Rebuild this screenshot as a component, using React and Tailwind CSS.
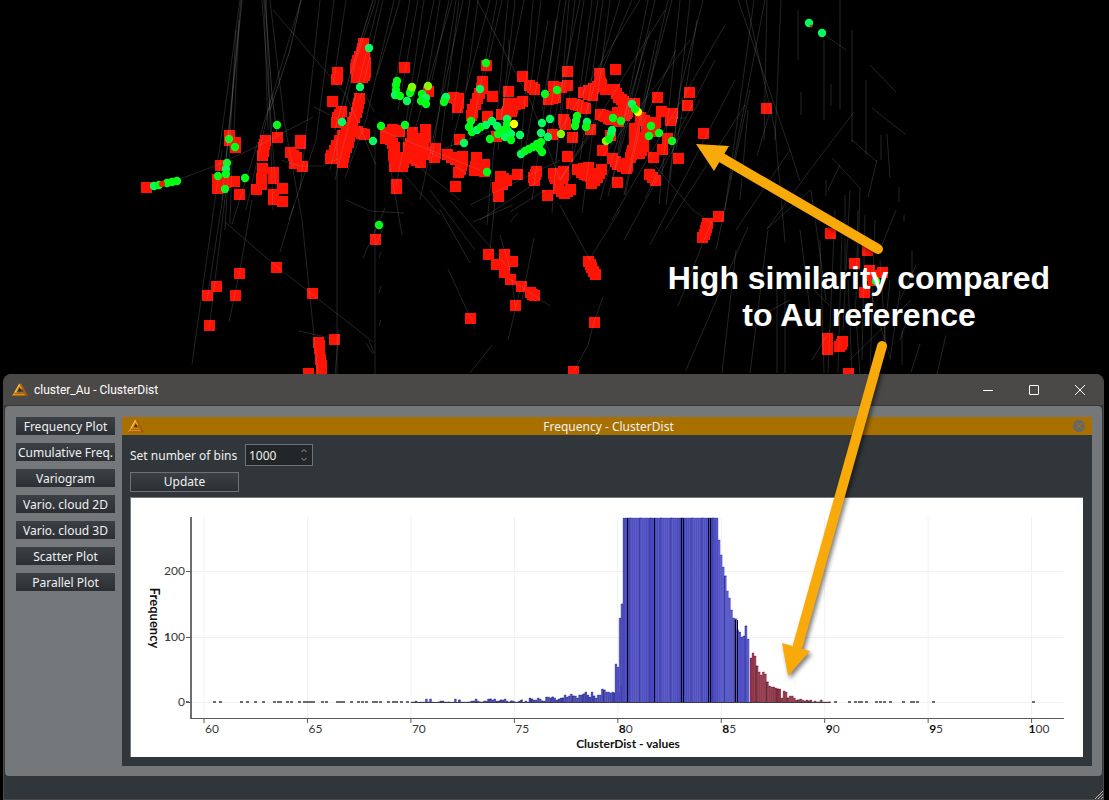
import React, { useState } from 'react';

// Drill hole traces: x1, y1, x2, y2
const traces = [
  [241, 0, 222, 200], [240, 0, 218, 160], [239, 20, 234, 130], [222, 150, 192, 364], [226, 190, 209, 330],
  [224, 190, 207, 300], [232, 160, 230, 224], [236, 30, 225, 230], [262, 0, 276, 190], [266, 0, 273, 210],
  [270, 0, 284, 120], [264, 0, 268, 130], [301, 0, 268, 110], [268, 110, 232, 224], [272, 95, 246, 210],
  [320, 0, 300, 190], [334, 0, 316, 140], [316, 140, 289, 220], [346, 0, 334, 80], [273, 10, 346, 95],
  [346, 95, 376, 165], [376, 0, 356, 60], [356, 60, 330, 170], [383, 0, 360, 100], [379, 0, 335, 180],
  [394, 0, 366, 120], [366, 120, 345, 178], [400, 0, 377, 75], [337, 140, 337, 374], [375, 130, 375, 374],
  [284, 120, 302, 220], [302, 220, 318, 374], [252, 200, 240, 270], [240, 270, 229, 322], [225, 222, 277, 267],
  [277, 267, 312, 294], [312, 294, 373, 342], [366, 343, 373, 354], [369, 340, 374, 353], [299, 331, 330, 338],
  [339, 330, 335, 374], [294, 205, 280, 252], [385, 208, 363, 258], [346, 200, 370, 211], [370, 211, 404, 213],
  [384, 225, 376, 245], [381, 252, 379, 258], [381, 286, 379, 293], [381, 320, 379, 326],
  [177, 180, 215, 166], [215, 166, 262, 144], [262, 144, 313, 117], [281, 160, 300, 166], [300, 166, 322, 166],
  [322, 166, 340, 158], [314, 107, 342, 121], [362, 88, 374, 112], [390, 165, 402, 235],
  [410, 0, 392, 100], [418, 0, 398, 110], [424, 0, 402, 150], [434, 0, 396, 185], [440, 0, 424, 100],
  [452, 0, 415, 130], [449, 0, 432, 80], [456, 0, 430, 170], [463, 0, 420, 200], [470, 0, 452, 120],
  [459, 0, 440, 150], [478, 0, 466, 90], [490, 0, 450, 150], [497, 0, 470, 140], [502, 0, 484, 80],
  [508, 0, 490, 190], [477, 0, 530, 100], [530, 100, 560, 180], [515, 0, 498, 150], [509, 40, 509, 66],
  [524, 0, 500, 120], [533, 0, 520, 160], [541, 0, 530, 90], [548, 20, 520, 180], [556, 20, 532, 200],
  [560, 0, 542, 110], [566, 0, 545, 150], [575, 0, 556, 160], [569, 0, 552, 213], [584, 0, 563, 140],
  [580, 0, 550, 140], [592, 0, 572, 150], [598, 0, 570, 180], [603, 0, 580, 160], [610, 0, 582, 213],
  [620, 0, 584, 120], [640, 0, 560, 130], [632, 0, 598, 80], [655, 0, 612, 180], [648, 0, 618, 150],
  [665, 10, 560, 180], [650, 30, 600, 200], [645, 60, 608, 196], [656, 40, 624, 195], [668, 0, 625, 195],
  [676, 50, 640, 130], [672, 0, 640, 120], [690, 40, 600, 160], [680, 0, 659, 204], [690, 0, 670, 180],
  [703, 0, 680, 90], [680, 90, 666, 205], [697, 20, 676, 150], [725, 25, 612, 220], [715, 60, 645, 198],
  [700, 100, 624, 240], [735, 80, 650, 245], [745, 105, 665, 230], [650, 160, 693, 210], [693, 210, 716, 226],
  [765, 0, 730, 180], [754, 0, 725, 210], [750, 90, 716, 250], [748, 110, 740, 200], [767, 0, 764, 140],
  [738, 0, 790, 150], [746, 0, 775, 130], [775, 130, 785, 242], [781, 0, 775, 140], [790, 150, 800, 181],
  [790, 150, 736, 230], [771, 108, 757, 156], [748, 227, 686, 370], [736, 250, 722, 373], [712, 220, 678, 306],
  [768, 230, 750, 373], [777, 270, 777, 373], [785, 280, 785, 373], [800, 230, 810, 310], [840, 0, 840, 110],
  [854, 112, 810, 170], [810, 170, 767, 229], [872, 108, 905, 134], [870, 65, 896, 92], [822, 33, 846, 50],
  [824, 40, 824, 120], [798, 10, 798, 60], [801, 92, 801, 115], [831, 84, 831, 106], [852, 30, 852, 142],
  [866, 80, 866, 155], [881, 135, 881, 160], [887, 134, 890, 178], [877, 160, 868, 197], [852, 140, 877, 162],
  [832, 158, 860, 188], [860, 188, 858, 260], [840, 165, 828, 190], [826, 180, 826, 196], [899, 187, 899, 202],
  [904, 215, 904, 222], [896, 210, 882, 245], [810, 190, 767, 229], [811, 190, 818, 240], [818, 240, 826, 300],
  [845, 195, 845, 270], [850, 190, 843, 330], [858, 210, 856, 300], [835, 210, 828, 373], [842, 230, 838, 373],
  [875, 220, 870, 373], [865, 215, 862, 360], [880, 260, 886, 350], [890, 280, 884, 340], [900, 290, 890, 360],
  [912, 250, 912, 280], [916, 265, 900, 300], [922, 275, 905, 275], [902, 330, 902, 365], [907, 320, 900, 340],
  [920, 344, 911, 372], [946, 335, 937, 374], [911, 300, 850, 360], [790, 300, 762, 315], [814, 290, 830, 306],
  [830, 330, 812, 360], [855, 300, 860, 374], [848, 280, 852, 374], [870, 290, 890, 358], [820, 240, 824, 373],
  [450, 200, 510, 270], [430, 190, 475, 250], [440, 210, 470, 263], [448, 269, 471, 319], [471, 319, 475, 329],
  [495, 200, 490, 250], [500, 235, 512, 275], [534, 238, 522, 300], [520, 290, 508, 340], [492, 345, 470, 373],
  [510, 279, 550, 306], [512, 280, 515, 306], [560, 205, 590, 260], [620, 210, 589, 260], [603, 297, 594, 322],
  [594, 322, 588, 345], [588, 345, 574, 371], [513, 205, 473, 222], [490, 190, 487, 225], [518, 213, 510, 222],
  [470, 175, 430, 152], [470, 205, 560, 160], [480, 220, 540, 180], [510, 212, 545, 190], [560, 180, 600, 120],
  [380, 130, 480, 170], [400, 170, 440, 215], [410, 160, 460, 200], [440, 150, 520, 120], [672, 118, 686, 118],
];

// Each entry is a chain of x, y points drawn as square markers
const squares = [
  [146, 187], [229, 135, 229, 140], [235, 142, 235, 147], [220, 165], [217, 179, 217, 188, 225, 182], [234, 181],
  [239, 194], [265, 140, 263, 147, 262, 155], [262, 168], [261, 178, 261, 184], [256, 189], [277, 137],
  [273, 172, 273, 178], [282, 188], [273, 194, 273, 199], [282, 201], [300, 140, 300, 143], [290, 152, 296, 157, 294, 163],
  [302, 166], [337, 72, 336, 79], [332, 101], [341, 111, 337, 117, 336, 122], [363, 43, 361, 52, 357, 60, 355, 68, 356, 76],
  [362, 50, 365, 62, 365, 72, 362, 77, 356, 77, 360, 66], [359, 98, 357, 107, 354, 117, 350, 127, 342, 135, 336, 145, 331, 155, 330, 158],
  [350, 130, 348, 142, 344, 152, 342, 162, 340, 150, 336, 158], [357, 131, 364, 134],
  [404, 67], [428, 91], [453, 97, 458, 98, 457, 107], [486, 65], [482, 81, 481, 88, 477, 98, 472, 109, 471, 115], [487, 116],
  [492, 96], [508, 91], [522, 101, 515, 104, 508, 103, 511, 111, 501, 114, 512, 108], [522, 76], [529, 85, 534, 89],
  [553, 86], [548, 99, 555, 97], [561, 87], [567, 71], [567, 85], [459, 139], [496, 136], [552, 134],
  [385, 132, 385, 138, 392, 129, 399, 131], [390, 139, 394, 147, 393, 155, 394, 166, 402, 166, 403, 157], [412, 132, 412, 139, 408, 147, 413, 155],
  [425, 129, 425, 137, 421, 147, 420, 155, 420, 162, 412, 158], [416, 138, 422, 140], [435, 148, 434, 157, 426, 151],
  [396, 184, 396, 188], [447, 154, 455, 159, 462, 156, 461, 165, 458, 172], [455, 186], [476, 157, 476, 162, 474, 170, 484, 164, 484, 171],
  [500, 176, 506, 180, 497, 187, 498, 196], [517, 174], [536, 171, 533, 177, 534, 180], [553, 173, 555, 178, 563, 171, 562, 178],
  [558, 188, 564, 193, 570, 189], [547, 195], [599, 73, 599, 79, 601, 84, 593, 88, 583, 92, 592, 95], [615, 69],
  [605, 89, 614, 89, 618, 97, 623, 101], [571, 103, 578, 105, 585, 108], [563, 119, 565, 124], [572, 137], [567, 156],
  [590, 129], [600, 114, 605, 116, 610, 119, 617, 112], [618, 121], [627, 111, 624, 115], [634, 103], [640, 117, 647, 122, 655, 122, 653, 131, 646, 130],
  [657, 97], [689, 92], [687, 105], [661, 111], [672, 113, 670, 120], [667, 138], [662, 149], [653, 157], [678, 158], [703, 133],
  [649, 174, 655, 180], [634, 128, 634, 137, 643, 137, 643, 146, 639, 153, 632, 150, 630, 157], [634, 142], [610, 135], [602, 150],
  [612, 158, 617, 164, 626, 168, 627, 163], [617, 182], [601, 169, 597, 177, 591, 183], [588, 167, 577, 169, 584, 174, 590, 176],
  [766, 108], [718, 216], [707, 223, 705, 230, 702, 237], [830, 233], [867, 250], [854, 263], [869, 270, 873, 280], [882, 272],
  [864, 292], [827, 338], [827, 349], [842, 341, 839, 346], [848, 373], [375, 239], [276, 267], [239, 273], [216, 286],
  [207, 295], [235, 295], [209, 325], [312, 293], [334, 339], [318, 342, 319, 348], [320, 359, 321, 371], [308, 373],
  [488, 254], [504, 254, 504, 272], [512, 261], [496, 264], [510, 279], [521, 286], [530, 292, 534, 295], [515, 305], [470, 318],
  [588, 261, 591, 267, 595, 274], [594, 322], [573, 371],
];

const dotColors = {
  g: '#00ff14',
  t: '#00ff5c',
  l: '#84ff00',
  y: '#ffff00',
};

const dots = [
  [369, 48, 't'], [360, 87, 't'], [342, 122, 't'], [277, 125, 'g'], [381, 126, 'g'], [373, 141, 't'], [229, 139, 'g'],
  [235, 147, 'g'], [227, 163, 'g'], [226, 169, 't'], [218, 176, 'g'], [226, 174, 'g'], [225, 189, 'g'], [245, 178, 'g'],
  [154, 186, 't'], [159, 185, 'g'], [167, 183, 'g'], [172, 182, 'g'], [177, 181, 'g'], [397, 81, 'g'], [396, 85, 'g'],
  [396, 90, 'g'], [395, 95, 't'], [400, 96, 'g'], [410, 93, 'g'], [411, 90, 'g'], [412, 87, 'l'], [407, 101, 't'], [428, 86, 'l'],
  [422, 94, 'g'], [426, 98, 't'], [421, 101, 'g'], [426, 104, 'g'], [446, 97, 't'], [445, 99, 't'], [444, 102, 'g'], [486, 63, 'g'],
  [480, 89, 't'], [405, 125, 'g'], [471, 121, 'g'], [469, 127, 'g'], [472, 132, 'g'], [477, 130, 't'], [481, 127, 'g'],
  [486, 125, 't'], [492, 121, 't'], [497, 126, 't'], [507, 119, 't'], [507, 124, 'g'], [502, 130, 'g'], [508, 131, 'g'],
  [498, 134, 'g'], [490, 139, 'g'], [464, 143, 't'], [505, 137, 't'], [511, 134, 't'], [511, 140, 'g'], [520, 135, 't'],
  [514, 124, 'y'], [542, 123, 't'], [550, 119, 't'], [545, 94, 'g'], [557, 90, 'g'], [541, 133, 't'], [548, 137, 't'],
  [561, 134, 'l'], [521, 154, 't'], [525, 151, 'g'], [529, 149, 'g'], [533, 147, 'g'], [537, 144, 'g'], [541, 142, 'g'],
  [539, 148, 'g'], [542, 152, 'g'], [487, 172, 'g'], [577, 116, 'g'], [576, 121, 'g'], [575, 126, 'g'], [587, 122, 't'],
  [586, 127, 'g'], [638, 112, 'y'], [632, 104, 't'], [635, 109, 'g'], [606, 141, 'l'], [612, 130, 't'], [611, 134, 't'],
  [609, 139, 'g'], [651, 126, 'g'], [649, 136, 'g'], [659, 133, 'g'], [672, 141, 'g'], [379, 225, 'g'], [809, 23, 't'],
  [822, 33, 't'], [876, 281, 'g'], [613, 118, 'g'], [621, 121, 'g'],
];

const chainMarkers = (points) => {
  const out = [];
  for (let i = 0; i < points.length; i += 2) {
    const [x, y, nx, ny] = points.slice(i, i + 4);
    out.push([x, y]);
    if (nx !== undefined) {
      out.push([Math.round((x + nx) / 2), Math.round((y + ny) / 2)]);
    }
  }
  return out;
};

const DrillScene = () => (
  <svg
    viewBox="0 0 1109 374"
    preserveAspectRatio="xMidYMax slice"
    className="block w-full h-full"
    role="img"
    aria-label="Drill holes"
  >
    <g fill="#ff1405">
      {squares.flatMap(chainMarkers).map(([x, y], i) => (
        <rect key={i} x={x - 5} y={y - 5} width="11" height="11" />
      ))}
    </g>
    {dots.map(([x, y, c], i) => (
      <circle key={i} cx={x} cy={y} r="4.2" fill={dotColors[c]} />
    ))}
    <circle cx="162" cy="184" r="3" fill="#ff1405" />
    <circle cx="811" cy="26" r="1.5" fill="#b04a10" />
    <g stroke="#a0a5aa" strokeOpacity="0.22">
      {traces.map(([x1, y1, x2, y2], i) => (
        <line key={i} x1={x1} y1={y1} x2={x2} y2={y2} />
      ))}
    </g>
    <g stroke="#a0a5aa" strokeOpacity="0.3" fill="none">
      <path d="M242 0L234 80L225 170" />
      <path d="M301 0L290 50L270 110" />
      <path d="M265 0L272 95L277 135" />
      <path d="M373 0L350 75L335 130" />
    </g>
  </svg>
);

// Histogram geometry
const BASE = 205;
const STEP = 2.07;
const xOf = (value) => 73 + (value - 60) * 20.69;

const xTicks = [
  { value: 60, strong: '', light: '60' },
  { value: 65, strong: '', light: '65' },
  { value: 70, strong: '', light: '70' },
  { value: 75, strong: '', light: '75' },
  { value: 80, strong: '8', light: '0' },
  { value: 85, strong: '8', light: '5' },
  { value: 90, strong: '9', light: '0' },
  { value: 95, strong: '9', light: '5' },
  { value: 100, strong: '1', light: '00' },
];

const lowTail = [
  1, 1, 2, 0, 1, 1, 1, 4, 1, 4, 1, 0, 0, 1, 2, 2, 1, 1, 1, 0, 1, 4, 0, 3, 1, 1, 1, 1, 1, 2, 2, 4, 2, 1, 1, 2, 2, 4,
  4, 3, 4, 2, 2, 3, 3, 4, 2, 1, 2, 2, 1, 1, 2, 3, 0, 2, 1, 5, 4, 3, 3, 5, 4, 2, 2, 6, 6, 5, 6, 5, 3, 4, 5, 5, 8, 6,
  7, 9, 7, 7, 5, 8, 8, 9, 11, 8, 6, 11, 7, 5, 8, 8, 14, 13, 11, 11, 10, 11, 10, 11, 10, 17,
];
const rise = [39, 36, 85, 99];
const fall = [163, 148, 136, 127, 112, 105, 93, 85, 84, 73, 71, 66, 67, 77, 64];
const highTail = [
  45, 50, 47, 37, 31, 28, 31, 29, 21, 17, 16, 16, 15, 14, 14, 5, 12, 11, 5, 7, 7, 5, 3, 3, 4, 3, 2, 3, 2, 3, 1, 2, 1,
  1, 3, 1, 1, 1, 1,
];
const strays = [
  55, 82, 88, 109, 115, 123, 131, 142, 146, 148, 155, 159, 167, 172, 175, 178, 181, 190, 194,
  205, 208, 211, 219, 226, 230, 234, 241, 244, 248, 256, 261, 264, 269, 275, 703, 717, 723, 727, 729,
  734, 744, 748, 752, 758, 771, 779, 781, 785, 801, 901,
];

const Bars = ({ start, heights, fill, dark }) =>
  heights.map((h, i) =>
    h > 0 ? (
      <g key={i}>
        <rect x={start + i * STEP} y={BASE - h} width={STEP} height={h} fill={fill} />
        <path
          d={`M${start + i * STEP} ${BASE}V${BASE - h}h${STEP}`}
          fill="none"
          stroke={dark}
          strokeWidth="0.8"
          strokeOpacity={i % 5 === 3 ? 0.8 : 0.4}
        />
      </g>
    ) : null
  );

const Histogram = () => {
  const plateauStart = 492;
  const plateau = Array.from({ length: 46 }, () => 185);

  return (
    <svg
      viewBox="0 0 952 259"
      className="block w-full h-auto font-[family-name:Lato,sans-serif] text-[12px]"
      role="img"
      aria-label="Histogram of ClusterDist"
    >
      <g stroke="#f1f1f1">
        {xTicks.map((t) => (
          <line key={t.value} x1={xOf(t.value)} y1="19" x2={xOf(t.value)} y2="220" />
        ))}
        {[73, 139, 204].map((y) => (
          <line key={y} x1="61" y1={y + 0.5} x2="932" y2={y + 0.5} />
        ))}
      </g>

      {strays.map((x) => (
        <rect key={x} x={x} y={BASE - 2} width="3" height="2" fill="#6a6a72" />
      ))}
      <Bars start={280} heights={lowTail} fill="#4a4ac8" dark="#16163c" />
      <Bars start={484} heights={rise} fill="#5252cc" dark="#30306a" />
      <Bars start={plateauStart} heights={plateau} fill="#5252cc" dark="#1c1c78" />
      <Bars start={plateauStart + 46 * STEP} heights={fall} fill="#5a5ade" dark="#101040" />
      <Bars start={619} heights={highTail} fill="#a03a50" dark="#200808" />
      <g stroke="#000010" strokeWidth="1">
        {[496, 523, 550, 552, 577, 579].map((x) => (
          <line key={x} x1={x + 0.5} y1="20" x2={x + 0.5} y2={BASE} />
        ))}
        {[604, 606].map((x) => (
          <line key={x} x1={x + 0.5} y1="122" x2={x + 0.5} y2={BASE} />
        ))}
      </g>
      <line x1="280" y1={BASE - 0.5} x2="697" y2={BASE - 0.5} stroke="#3c3c46" />

      <path d="M60 19V221" stroke="#6e6e6e" strokeWidth="2" />
      <path d="M60 220.5H933" stroke="#5a5a5a" />
      <g stroke="#5a5a5a">
        {xTicks.map((t) => (
          <line key={t.value} x1={xOf(t.value)} y1="220" x2={xOf(t.value)} y2="225" />
        ))}
        {[73, 139, 204].map((y) => (
          <line key={y} x1="55" y1={y + 0.5} x2="60" y2={y + 0.5} />
        ))}
      </g>

      <g fill="#3a3a3a">
        {xTicks.map((t) => (
          <text key={t.value} x={xOf(t.value) + (t.value === 100 ? -3 : 1)} y="235">
            <tspan className="font-bold" fill="#111111">{t.strong}</tspan>
            {t.light}
          </text>
        ))}
        <text x="54" y="77" textAnchor="end">200</text>
        <text x="54" y="143" textAnchor="end">
          <tspan className="font-bold">1</tspan>00
        </text>
        <text x="54" y="208" textAnchor="end">0</text>
      </g>
      <g className="font-bold" fill="#111111" textAnchor="middle">
        <text x="497" y="250">ClusterDist - values</text>
        <text className="text-[13px]" transform="translate(19 120) rotate(90)">Frequency</text>
      </g>
    </svg>
  );
};

const LogoIcon = ({ className }) => (
  <svg viewBox="0 0 16 14" className={className} aria-hidden="true">
    <path d="M7.5 0.5H9.5L16 13H13.5Z" fill="#a85c10" />
    <path d="M7.5 0.5L10.5 6L8.8 6.5L7.5 4L4.5 9.5H11.5L13.5 13H0Z" fill="#e89a1c" />
    <path d="M7.8 4.5L9.5 8H6.3Z" fill="#3c2410" />
    <path d="M2.8 10.7H12M1 12.7H15" stroke="#8a4a10" strokeWidth="0.8" />
    <path d="M7.5 1L3 9" stroke="#ffcf62" strokeWidth="0.8" />
  </svg>
);

const plotButtons = [
  'Frequency Plot',
  'Cumulative Freq.',
  'Variogram',
  'Vario. cloud 2D',
  'Vario. cloud 3D',
  'Scatter Plot',
  'Parallel Plot',
];

const TitleBar = () => (
  <header className="flex items-center h-8 pl-2 pr-[17px] bg-[#4b4947] border-b border-[#33383c] text-white">
    <LogoIcon className="w-4 h-[14px] mr-1.5" />
    <h1 className="flex-1 text-[12px] font-[family-name:Roboto,sans-serif]">cluster_Au - ClusterDist</h1>
    <div className="flex gap-[34px]">
      <button type="button" aria-label="Minimize">
        <svg viewBox="0 0 12 12" className="block w-3 h-3">
          <path d="M1 6.5H11" stroke="currentColor" />
        </svg>
      </button>
      <button type="button" aria-label="Maximize">
        <svg viewBox="0 0 12 12" className="block w-3 h-3">
          <rect x="1.5" y="1.5" width="9" height="9" rx="0.5" fill="none" stroke="currentColor" />
        </svg>
      </button>
      <button type="button" aria-label="Close">
        <svg viewBox="0 0 12 12" className="block w-3 h-3">
          <path d="M1 1L11 11M11 1L1 11" stroke="currentColor" />
        </svg>
      </button>
    </div>
  </header>
);

const FrequencyPanel = () => {
  const [bins, setBins] = useState('1000');

  return (
    <section className="flex-1 min-w-0 bg-[#31363b]">
      <div className="flex items-center h-[18px] pl-1.5 pr-[7px] bg-[#a87000]">
        <LogoIcon className="w-4 h-[14px]" />
        <h2 className="flex-1 text-center text-[12px] leading-[18px] pt-px">Frequency - ClusterDist</h2>
        <button type="button" aria-label="Close panel">
          <svg viewBox="0 0 12 12" className="block w-3 h-3">
            <circle cx="6" cy="6" r="6" fill="#65686a" />
            <path d="M3 3L9 9M9 3L3 9" stroke="#a87000" />
          </svg>
        </button>
      </div>
      <div className="pt-2 pb-[9px] pl-2 pr-[9px]">
        <div className="flex items-center gap-1.5 h-6">
          <label htmlFor="bins" className="w-[109px] pt-px whitespace-nowrap">Set number of bins</label>
          <div className="flex items-center w-[68px] h-[22px] pr-1 border border-[#6d7276] bg-[#232629]">
            <input
              id="bins"
              type="text"
              value={bins}
              onChange={(e) => setBins(e.target.value)}
              className="flex-1 min-w-0 pl-[3px] pt-px bg-transparent outline-none"
            />
            <svg viewBox="0 0 8 14" className="w-2 h-[14px]" aria-hidden="true">
              <path d="M1.5 4L4 1.5L6.5 4M1.5 10L4 12.5L6.5 10" fill="none" stroke="#9a9da0" />
            </svg>
          </div>
        </div>
        <button
          type="button"
          className="block w-[109px] h-5 my-[5px] border border-[#6d7276] bg-linear-to-b from-[#3b4045] to-[#2c3034] leading-[18px]"
        >
          Update
        </button>
        <div className="border-t border-l border-[#76797c] bg-white">
          <Histogram />
        </div>
      </div>
    </section>
  );
};

const Callouts = () => (
  <div className="absolute inset-0 pointer-events-none">
    <svg
      viewBox="0 0 1109 800"
      preserveAspectRatio="xMidYMin meet"
      className="absolute top-0 left-0 w-full drop-shadow-[2px_3px_2px_rgba(0,0,0,0.5)]"
      aria-hidden="true"
    >
      <g stroke="#f9aa0b" strokeWidth="10" strokeLinecap="round">
        <path d="M878 249L722 158" />
        <path d="M882 346L798 645" />
      </g>
      <path d="M696 144L729 146L714 171ZM788 676L782 643L810 651Z" fill="#f9aa0b" />
    </svg>
    <p className="absolute top-[260px] left-0 w-full pl-[609px] text-center text-[32px] leading-[37px] font-bold text-white font-['Liberation_Sans',Arial,sans-serif]">
      High similarity compared
      <br />
      to Au reference
    </p>
  </div>
);

const App = () => (
  <div className="relative flex flex-col min-h-screen bg-black overflow-hidden text-[12px] text-[#eff0f1] font-['Noto_Sans',sans-serif]">
    <div className="h-[374px]">
      <DrillScene />
    </div>
    <main className="flex flex-col flex-1 ml-[3px] mr-[5px] rounded-t-lg overflow-hidden border-x border-b border-[#4b4947] bg-[#31363b]">
      <TitleBar />
      <div className="flex items-start gap-[7px] mx-px pl-[11px] pr-2.5 pt-[11px] pb-2.5 rounded bg-[#74787b]">
        <nav className="flex flex-col gap-2 w-[99px]">
          {plotButtons.map((name) => (
            <button
              key={name}
              type="button"
              className="h-[18px] pt-px bg-linear-to-b from-[#3b4045] to-[#2c3034] leading-[18px] whitespace-nowrap"
            >
              {name}
            </button>
          ))}
        </nav>
        <FrequencyPanel />
      </div>
      <footer className="flex flex-1 items-end justify-end">
        <svg viewBox="0 0 8 8" className="w-2 h-2" aria-hidden="true">
          <path d="M0 8L8 0M3 8L8 3M6 8L8 6" stroke="#b4b6b8" />
        </svg>
      </footer>
    </main>
    <Callouts />
  </div>
);

export default App;
